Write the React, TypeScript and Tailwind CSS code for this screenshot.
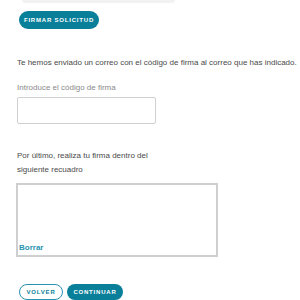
export default function App() {
  return (
    <div className="w-[300px] h-[300px] overflow-hidden bg-white font-['Liberation_Sans',Arial,sans-serif] relative">
      <div className="ml-[22px] w-[153px] h-[3px] bg-[#f2f2f2] rounded-b-[3px]" />
      <div className="pl-[19px] pt-[8px] flex">
        <button className="w-[80px] h-[18px] rounded-full bg-[#0a7f99] text-white text-[6px] font-bold tracking-[0.8px] uppercase">
          Firmar solicitud
        </button>
      </div>
      <p className="pl-[17px] mt-[29px] text-[8px] leading-[10px] text-[#4a4a4a] whitespace-nowrap">
        Te hemos enviado un correo con el código de firma al correo que has indicado.
      </p>
      <label className="block pl-[17px] mt-[15px] text-[8px] leading-[10px] text-[#8a8a8a]">
        Introduce el código de firma
      </label>
      <div className="pl-[17px] mt-[4px] flex">
        <input className="w-[139px] h-[27px] border border-[#d0d0d0] rounded-[2px] bg-white outline-none" />
      </div>
      <p className="pl-[17px] mt-[25px] text-[8px] leading-[14px] text-[#4a4a4a] w-[170px]">
        Por último, realiza tu firma dentro del siguiente recuadro
      </p>
      <div className="ml-[16px] mt-[6px] w-[202px] h-[74px] border-2 border-[#cfcfcf] flex flex-col justify-end px-[1px] pb-[2px]">
        <span className="text-[8px] font-bold text-[#2a93b3] leading-[10px]">Borrar</span>
      </div>
      <div className="pl-[19px] mt-[27px] flex gap-[4px]">
        <button className="w-[44px] h-[16px] rounded-full border border-[#2a93b3] text-[#0a7f99] text-[6px] font-bold tracking-[0.8px] bg-white">
          VOLVER
        </button>
        <button className="w-[56px] h-[16px] rounded-full bg-[#0a7f99] text-white text-[6px] font-bold tracking-[0.8px]">
          CONTINUAR
        </button>
      </div>
    </div>
  );
}
